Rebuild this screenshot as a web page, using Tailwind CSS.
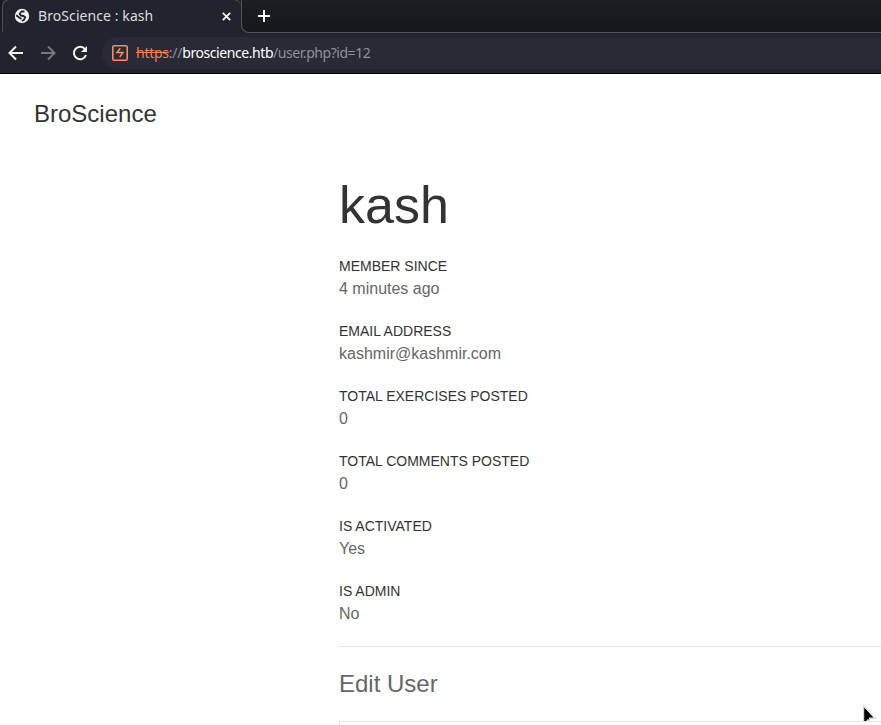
<!DOCTYPE html>
<html lang="en">
<head>
<meta charset="utf-8">
<title>BroScience : kash</title>
<script src="https://cdn.jsdelivr.net/npm/@tailwindcss/browser@4"></script>
</head>
<body class="relative flex h-[725px] w-[881px] flex-col overflow-hidden bg-white font-['Liberation_Sans',Arial,sans-serif]">
<header class="h-[74px] shrink-0 border-b border-black bg-[#22242d] font-['Noto_Sans',sans-serif]">
  <div class="flex h-[33px] bg-[#22242d]">
    <div class="h-[31px] w-[2px] shrink-0 bg-[#1a1b20]"></div>
    <div class="z-10 -mt-px flex h-[33px] w-[239px] shrink-0 items-center rounded-t-[8px] border-t border-l border-[#4b4d55] bg-[#22242d] pl-[10px]">
      <svg class="mr-[7px] size-[18px] shrink-0" viewBox="0 0 18 18"><circle cx="9" cy="9" r="7.200" fill="#f1f1f1"/><path d="M11.500 4.500L8.500 4.500 6.600 6.800 7.800 8.500 10.500 9 12.200 10.300 10.800 13 9 14M3.200 8.200L6.500 10.700 8.500 12" fill="none" stroke="#22242d" stroke-width="1.800" stroke-linejoin="round"/></svg>
      <span class="text-[14px] leading-5 tracking-[.08px] whitespace-pre text-[#dcdcde]">BroScience : kash</span>
      <svg class="mr-[10px] ml-auto size-[9px]" viewBox="0 0 9 9" stroke="#f4f4f4" stroke-width="1.800"><path d="M.8.8l7.400 7.400M8.200.8L.8 8.200"/></svg>
    </div>
    <div class="flex h-[33px] flex-1 items-center rounded-bl-[8px] border-b border-l border-[#50525a] bg-linear-to-b from-[#1d1e23] to-[#17181c] pl-[16px]">
      <svg class="size-[12px]" viewBox="0 0 12 12" stroke="#fff" stroke-width="2"><path d="M6 0v12M0 6h12"/></svg>
    </div>
  </div>
  <div class="mt-1 flex h-[32px] items-center pl-[8px]">
    <svg class="size-[16px]" viewBox="0 0 16 16" fill="none" stroke="#f3f3f3" stroke-width="2"><path d="M15 8H2M8 1.500L1.500 8 8 14.500"/></svg>
    <svg class="ml-[16px] size-[16px]" viewBox="0 0 16 16" fill="none" stroke="#77787c" stroke-width="2"><path d="M1 8h13M8 1.500L14.500 8 8 14.500"/></svg>
    <svg class="ml-[16px] size-[16px]" viewBox="0 0 16 16" fill="none" stroke="#f3f3f3" stroke-width="2"><path d="M13 4.200A6.200 6.200 0 1 0 14 10"/><path d="M15 1v6H9z" fill="#f3f3f3" stroke="none"/></svg>
    <div class="ml-[14px] flex h-[32px] flex-1 items-center rounded-l-full bg-[#282a35] pl-[10px]">
      <svg class="size-[16px]" viewBox="0 0 16 16" fill="none"><rect x=".8" y=".8" width="14.400" height="14.400" rx="1.500" stroke="#ff8c5a" stroke-width="1.600"/><path d="M8.300 3.200L5 7.400H11L7.700 12.200" stroke="#ff8c5a" stroke-width="1.500"/></svg>
      <div class="ml-[8px] text-[14px] leading-5 tracking-[-.25px] text-[#8e9197]"><span class="text-[#ee805a] line-through">https</span>://<span class="tracking-[-.43px] text-white">broscience.htb</span><span class="tracking-[-.45px]">/user.php?id=12</span></div>
    </div>
  </div>
</header>
<nav class="flex h-[80px] shrink-0 items-center pl-[34px] text-[24px] text-[#333]">BroScience</nav>
<main class="ml-[339px] flex flex-col text-[16px] leading-6 text-[#666]">
  <h1 class="mt-[20px] text-[52px] leading-[62px] text-[#333]">kash</h1>
  <dl class="mt-[20px]">
    <dt class="h-[21px] text-[14px] leading-[21px] text-[#333]">MEMBER SINCE</dt>
    <dd class="mb-5">4 minutes ago</dd>
    <dt class="h-[21px] text-[14px] leading-[21px] text-[#333]">EMAIL ADDRESS</dt>
    <dd class="mb-5">kashmir@kashmir.com</dd>
    <dt class="h-[21px] text-[14px] leading-[21px] text-[#333]">TOTAL EXERCISES POSTED</dt>
    <dd class="mb-5">0</dd>
    <dt class="h-[21px] text-[14px] leading-[21px] text-[#333]">TOTAL COMMENTS POSTED</dt>
    <dd class="mb-5">0</dd>
    <dt class="h-[21px] text-[14px] leading-[21px] text-[#333]">IS ACTIVATED</dt>
    <dd class="mb-5">Yes</dd>
    <dt class="h-[21px] text-[14px] leading-[21px] text-[#333]">IS ADMIN</dt>
    <dd class="mb-5">No</dd>
  </dl>
  <hr class="border-[#e5e5e5]">
  <h2 class="mt-5 text-[24px] leading-[34px]">Edit User</h2>
  <div class="mt-5 h-10 border-t border-l border-[#e5e5e5]"></div>
</main>
<svg class="absolute top-[705px] left-[863px] h-[16px] w-[14px]" viewBox="0 0 14 16"><path d="M.5.500V20L5 15l2 4V13.500H13z" fill="#fff" stroke="#bbb" stroke-width=".6"/><path d="M1.200 2.500V16H3l2-2 1 1V12.500H10.500z" fill="#000"/></svg>
</body>
</html>
